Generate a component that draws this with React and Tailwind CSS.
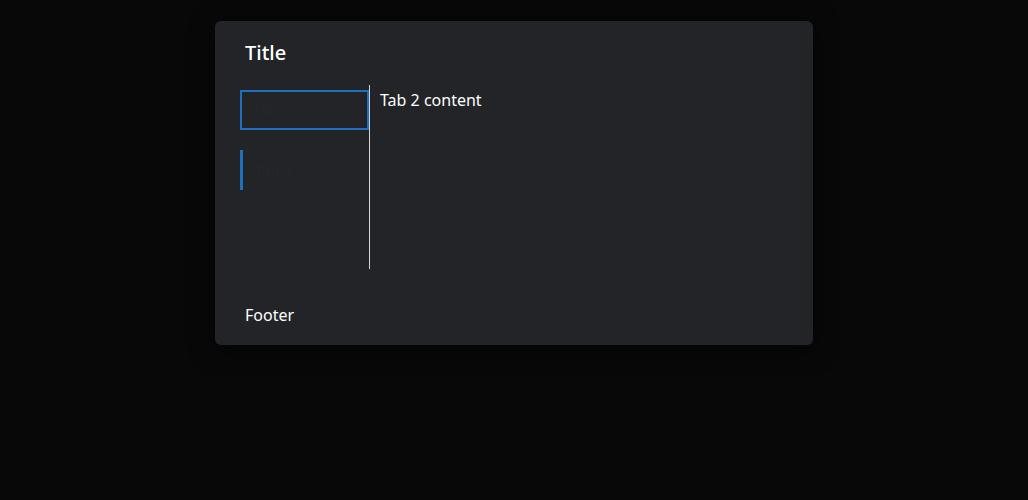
export default function App() {
  return (
    <div className="min-h-[500px] bg-[#080808] pt-[21px] font-['Noto_Sans',sans-serif]">
      <div className="mx-auto w-[598px] h-[324px] rounded-[6px] bg-[#232428] shadow-[0_4px_24px_rgba(0,0,0,0.6)] px-[25px] flex flex-col">
        <h1 className="pt-[18px] text-[20px] leading-[28px] font-medium text-white pl-[5px]">Title</h1>
        <div className="mt-[18px] flex h-[184px]">
          <div className="w-[130px] border-r border-[#d4d4d4] flex flex-col pt-[5px]">
            <button className="h-[40px] w-[129px] border-2 border-[#1f6fbf] text-left pl-[10px] text-[15px] text-[#26272b]">
              Tab 1
            </button>
            <button className="mt-[20px] h-[40px] w-[129px] border-l-[3px] border-[#1f6fbf] text-left pl-[12px] text-[15px] text-[#26272b]">
              Tab 2
            </button>
          </div>
          <div className="pl-[10px] pt-[4px] text-[16px] leading-[22px] text-white">Tab 2 content</div>
        </div>
        <div className="mt-auto pb-[19px] pl-[5px] text-[16px] leading-[22px] text-white">Footer</div>
      </div>
    </div>
  );
}
